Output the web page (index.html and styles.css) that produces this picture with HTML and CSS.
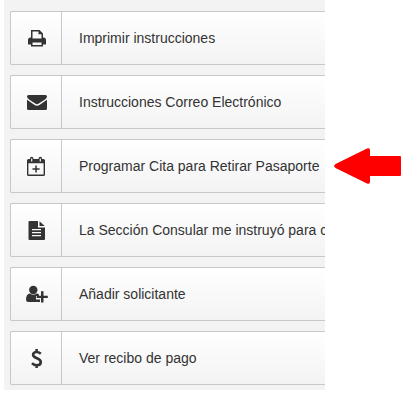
FILE: index.html
```html
<!DOCTYPE html>
<html lang="es">
<head>
    <meta charset="UTF-8">
    <title>Instrucciones</title>
    <meta name="viewport" content="width=device-width, initial-scale=1.0">
    <link rel="stylesheet" href="styles.css">
</head>
<body>
    <div class="page">
        <nav class="menu">
            <a class="menu-item" href="#">
                <span class="icon">
                    <svg viewBox="0 0 24 24" aria-hidden="true">
                        <path fill-rule="evenodd" d="M7 4h8.500l3.500 3.500v4h.500a2.500 2.500 0 0 1 2.500 2.500v4.500h-3v2h-12v-2h-3v-4.500a2.500 2.500 0 0 1 2.500-2.500h.500zM8.500 5.400v7.100h9v-4.200h-3v-2.900zM8.500 16.500v2.600h9v-2.600z"/>
                    </svg>
                </span>
                <span class="label">Imprimir instrucciones</span>
            </a>
            <a class="menu-item" href="#">
                <span class="icon">
                    <svg viewBox="0 0 24 24" aria-hidden="true">
                        <path d="M4.500 5h17a1.500 1.500 0 0 1 1.500 1.500c0 1-1 2.200-2 2.900l-6.200 4.200q-1.800 1.200-3.600 0l-6.200-4.200c-1-.7-2-1.900-2-2.900a1.500 1.500 0 0 1 1.500-1.500z"/>
                        <path d="M3 9.500q.6.700 1.500 1.300l5.700 3.900q2.800 2 5.600 0l5.700-3.900q.9-.6 1.500-1.300v9a1.500 1.500 0 0 1-1.500 1.500h-17a1.500 1.500 0 0 1-1.500-1.500z"/>
                    </svg>
                </span>
                <span class="label">Instrucciones Correo Electrónico</span>
            </a>
            <a class="menu-item" href="#">
                <span class="icon">
                    <svg viewBox="0 0 24 24" aria-hidden="true">
                        <path fill-rule="evenodd" d="M4.500 5h1.500v-.500a1.700 1.700 0 0 1 3.400 0v.500h5.200v-.500a1.700 1.700 0 0 1 3.400 0v.500h1.500a1.500 1.500 0 0 1 1.500 1.500v14a1.500 1.500 0 0 1-1.500 1.500h-15a1.500 1.500 0 0 1-1.500-1.500v-14a1.500 1.500 0 0 1 1.500-1.500zM4.400 9.200v11.400h15.200v-11.400zM7.100 4.500v3h1.200v-3zM15.700 4.500v3h1.200v-3z"/>
                        <path d="M11.300 11.500h1.500v2.800h2.800v1.500h-2.800v2.800h-1.500v-2.800h-2.800v-1.500h2.800z"/>
                    </svg>
                </span>
                <span class="label">Programar Cita para Retirar Pasaporte</span>
            </a>
            <a class="menu-item" href="#">
                <span class="icon">
                    <svg viewBox="0 0 24 24" aria-hidden="true">
                        <path fill-rule="evenodd" d="M5.500 3h8.500v6.500h7v11.500a1 1 0 0 1-1 1h-14.500a1 1 0 0 1-1-1v-17a1 1 0 0 1 1-1zM8 11v1.200h9v-1.200zM8 14v1.200h9v-1.200zM8 17v1.200h9v-1.200z"/>
                        <path d="M15.500 3.200l5.200 4.800h-5.200z"/>
                    </svg>
                </span>
                <span class="label">La Sección Consular me instruyó para completar mi solicitud</span>
            </a>
            <a class="menu-item" href="#">
                <span class="icon">
                    <svg viewBox="0 0 24 24" aria-hidden="true">
                        <circle cx="9.300" cy="8" r="4.200"/>
                        <path d="M6 11.500q3.300 2.500 6.600 0 1.500 0 2.400 1v1.500h-3v3.600h4v2.400h-11.700q-2.300 0-2.300-2.300 0-5.700 4-6.200z"/>
                        <path d="M17 9.300h2.500v4.400h4.300v2.400h-4.300v4.300h-2.500v-4.300h-4.300v-2.400h4.300z"/>
                    </svg>
                </span>
                <span class="label">Añadir solicitante</span>
            </a>
            <a class="menu-item" href="#">
                <span class="icon">
                    <svg viewBox="0 0 24 24" aria-hidden="true">
                        <path class="line" d="M16.800 7.700q-2-1.700-4.200-1.700c-2 0-3.500 1-3.500 2.700 0 2.200 2 2.800 3.800 3.500s3.900 1.500 3.900 3.800c0 2-1.700 3.200-4 3.200q-2.800 0-4.800-2.100M12.600 3v3M12.600 19v3"/>
                    </svg>
                </span>
                <span class="label">Ver recibo de pago</span>
            </a>
        </nav>
        <div class="pointer">
            <svg viewBox="0 0 67 36" aria-hidden="true">
                <path d="M0 18q0-1 2-2.200l31-15.300q3-1 3 1.500v6h30q1 0 1 1v18q0 1-1 1h-30v6q0 2.500-3 1.500l-31-15.300q-2-1.200-2-2.200z"/>
            </svg>
        </div>
    </div>
</body>
</html>
```
FILE: styles.css
```css
body {
    background: #fff;
    color: #333;
    font-family: "Liberation Sans", Arial, sans-serif;
    font-size: 14px;
    line-height: 20px;
    margin: 0;
}
.page {
    display: flex;
    align-items: flex-start;
    padding-left: 4px;
}
.menu {
    flex: 1;
    min-width: 0;
    display: flex;
    flex-direction: column;
    gap: 10px;
    padding: 11px 0 5px 6px;
    background: #f3f3f3;
    overflow: hidden;
}
.menu-item {
    display: flex;
    border: 1px solid #c8c8c8;
    border-right: none;
    border-radius: 2px 0 0 2px;
    background: linear-gradient(#fff, #f3f3f3);
    color: #333;
    text-decoration: none;
}
.icon {
    flex: none;
    display: flex;
    align-items: center;
    justify-content: center;
    width: 50px;
    height: 52px;
    border-right: 1px solid #c8c8c8;
}
.icon svg {
    width: 24px;
    height: 24px;
    fill: #333;
}
.icon .line {
    fill: none;
    stroke: #333;
    stroke-width: 2.6;
}
.label {
    flex: 1;
    min-width: 0;
    padding: 16px 0 16px 17px;
    white-space: nowrap;
    overflow: hidden;
}
.pointer {
    flex: none;
    padding: 148px 18px 0 9px;
}
.pointer svg {
    display: block;
    width: 67px;
    height: 36px;
    fill: #f00;
}
```
